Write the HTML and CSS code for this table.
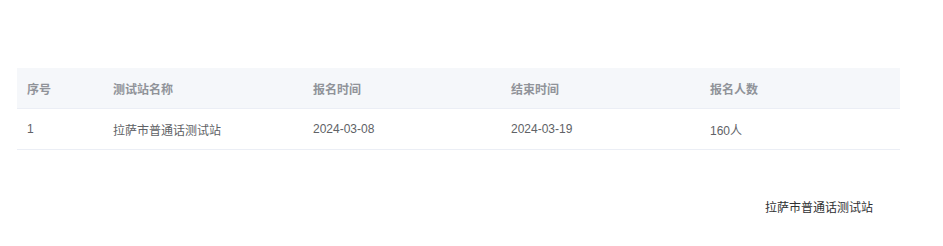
FILE: index.html
```html
<!DOCTYPE html>
<html lang="zh">
<head>
<meta charset="utf-8">
<link rel="stylesheet" href="styles.css">
</head>
<body>
<div class="page">
  <div class="table">
    <div class="row head">
      <div class="cell c1">序号</div>
      <div class="cell c2">测试站名称</div>
      <div class="cell c3">报名时间</div>
      <div class="cell c4">结束时间</div>
      <div class="cell c5">报名人数</div>
    </div>
    <div class="row body">
      <div class="cell c1">1</div>
      <div class="cell c2">拉萨市普通话测试站</div>
      <div class="cell c3">2024-03-08</div>
      <div class="cell c4">2024-03-19</div>
      <div class="cell c5">160人</div>
    </div>
  </div>
  <div class="footer">拉萨市普通话测试站</div>
</div>
</body>
</html>
```

FILE: styles.css
```css
html, body {
  margin: 0;
  padding: 0;
  background: #fff;
}
.page {
  padding: 68px 43px 0 17px;
  font-family: "Liberation Sans", "Noto Sans CJK SC", sans-serif;
  font-size: 12px;
}
.table {
  width: 883px;
}
.row {
  display: flex;
  border-bottom: 1px solid #ebeef5;
}
.row.head {
  height: 40px;
  background: #f5f7fa;
  color: #909399;
  font-weight: bold;
}
.row.body {
  height: 40px;
  color: #606266;
}
.cell {
  display: flex;
  align-items: center;
  padding-left: 10px;
  box-sizing: border-box;
}
.c1 { width: 86px; }
.c2 { width: 200px; }
.c3 { width: 198px; }
.c4 { width: 199px; }
.c5 { width: 200px; }
.footer {
  display: flex;
  justify-content: flex-end;
  padding-right: 27px;
  margin-top: 50px;
  color: #303133;
  line-height: 16px;
}
```
